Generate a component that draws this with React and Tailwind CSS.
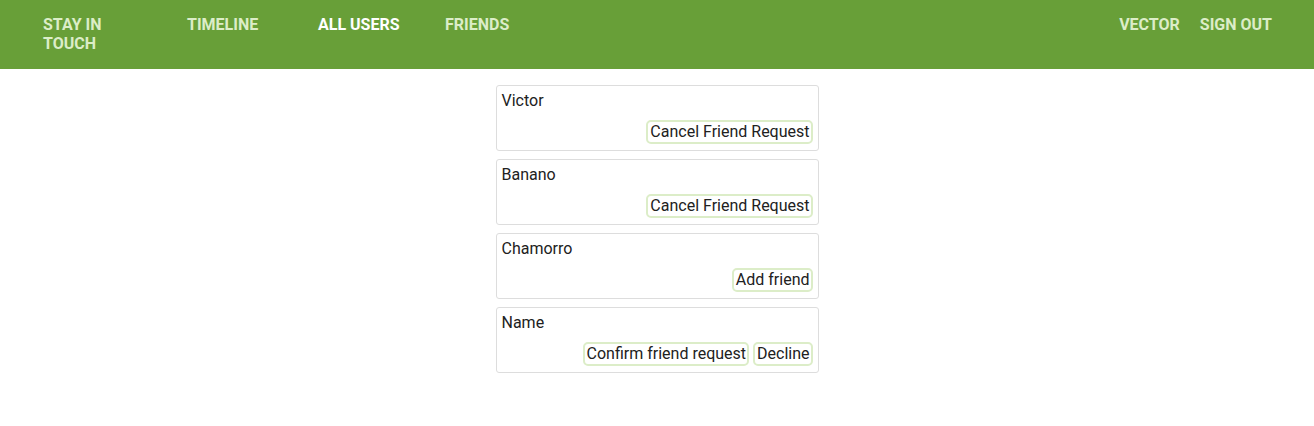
import React from "react";

const users = [
  { name: "Victor", actions: ["Cancel Friend Request"] },
  { name: "Banano", actions: ["Cancel Friend Request"] },
  { name: "Chamorro", actions: ["Add friend"] },
  { name: "Name", actions: ["Confirm friend request", "Decline"] },
];

function NavLink({ children, active, className }) {
  return (
    <a
      href="#"
      className={`${active ? "text-white" : "text-[#dcedc8]"} block font-bold uppercase text-base leading-[19px] ${className || ""}`}
    >
      {children}
    </a>
  );
}

function UserCard({ user }) {
  return (
    <div className="border border-[#dddddd] rounded-[3px] pt-[5px] pb-[6px] pl-[5px] pr-[5px] flex flex-col">
      <div className="text-base leading-[19px] text-[#212121]">{user.name}</div>
      <div className="flex justify-end gap-[4px] mt-[10px]">
        {user.actions.map((a) => (
          <button
            key={a}
            className="border-2 border-[#dcedc8] rounded-[5px] pl-[2px] pr-[1px] py-[1px] text-base leading-[18px] text-[#212121] bg-white"
          >
            {a}
          </button>
        ))}
      </div>
    </div>
  );
}

export default function App() {
  return (
    <div className="min-h-[426px] bg-white" style={{ fontFamily: "Roboto, 'Liberation Sans', sans-serif" }}>
      <nav className="bg-[#689f38] h-[69px] pl-[43px] pr-[42px] pt-[15px] flex items-start">
        <div className="w-[144px] shrink-0">
          <NavLink className="w-[70px]">Stay in touch</NavLink>
        </div>
        <div className="w-[131px] shrink-0">
          <NavLink>Timeline</NavLink>
        </div>
        <div className="w-[127px] shrink-0">
          <NavLink active>All users</NavLink>
        </div>
        <NavLink>Friends</NavLink>
        <div className="ml-auto flex gap-[20px]">
          <NavLink>Vector</NavLink>
          <NavLink>Sign out</NavLink>
        </div>
      </nav>
      <main className="flex justify-center pt-[16px]">
        <div className="w-[323px] flex flex-col gap-[8px]">
          {users.map((u) => (
            <UserCard key={u.name} user={u} />
          ))}
        </div>
      </main>
    </div>
  );
}
